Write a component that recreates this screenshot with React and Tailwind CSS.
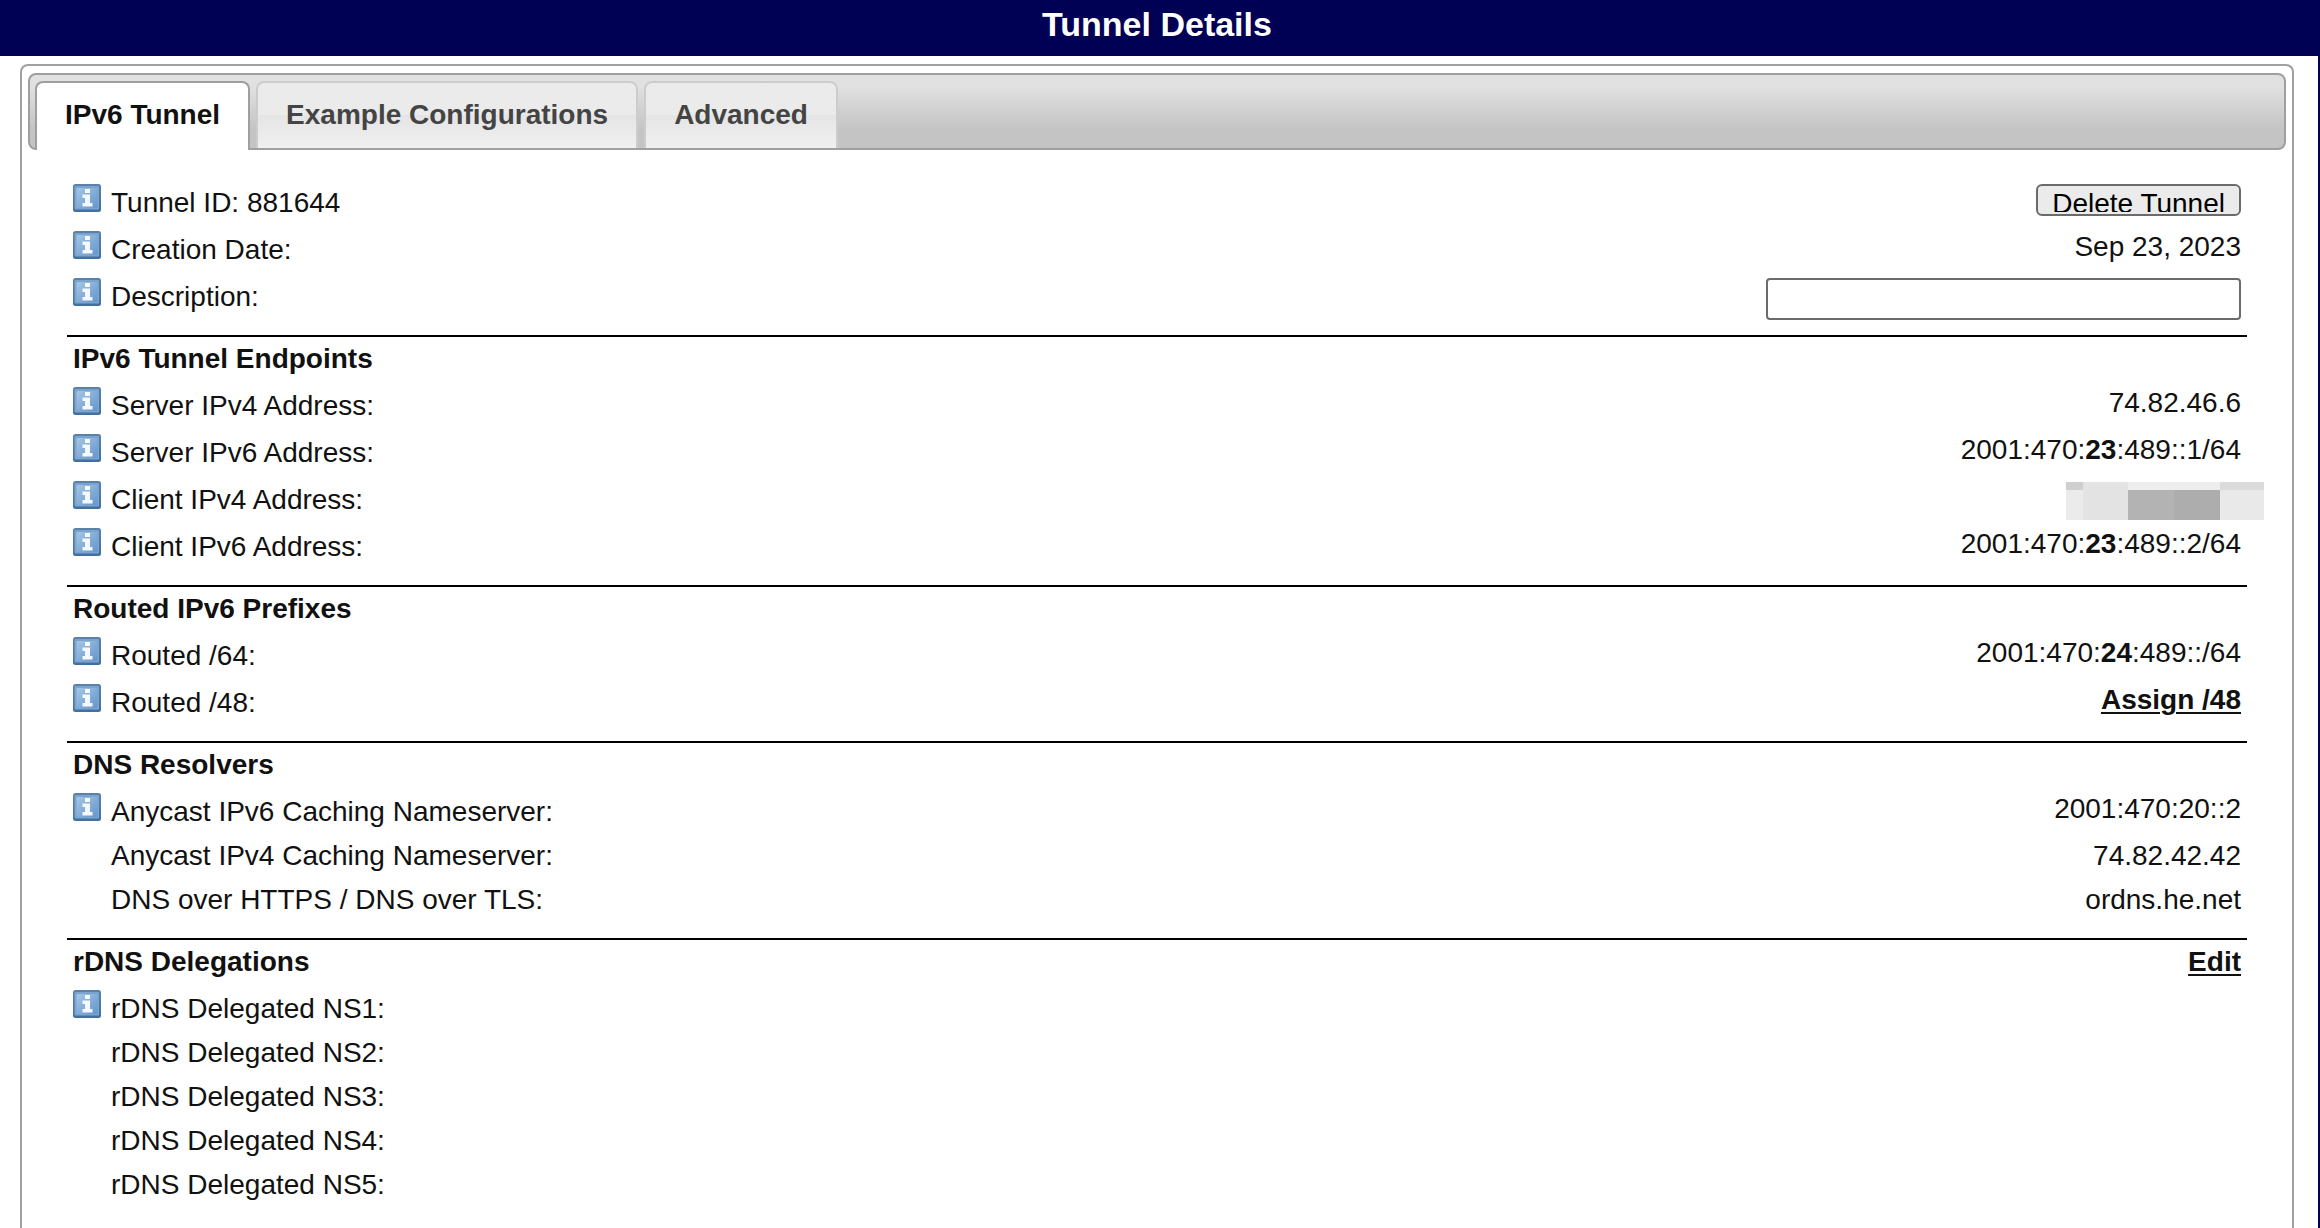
import { useState } from 'react';

const tabs = ['IPv6 Tunnel', 'Example Configurations', 'Advanced'];

/**
 * Small blue "i" square shown before the labels
 */
function InfoIcon() {
  return (
    <svg className="mt-1.5 size-7 shrink-0" viewBox="0 0 28 28" aria-hidden="true">
      <defs>
        <linearGradient id="info-fill" x1="0" y1="0" x2="1" y2="1">
          <stop offset="0" stopColor="#a6c6e6" />
          <stop offset="1" stopColor="#6496cb" />
        </linearGradient>
        <linearGradient id="info-edge" x1="0" y1="0" x2="0" y2="1">
          <stop offset="0" stopColor="#5c82a9" />
          <stop offset="1" stopColor="#426f9f" />
        </linearGradient>
      </defs>
      <rect width="28" height="28" rx="2.5" fill="url(#info-edge)" />
      <rect x="1.5" y="2" width="24.5" height="23.5" rx="1" fill="#7ba5d1" />
      <rect x="3.5" y="4" width="21" height="20" rx="1" fill="url(#info-fill)" />
      <path
        d="M12 5h5v4h-5zM9.5 10.5H17V19h2.500v3.500H9.500V19H12v-5H9.500z"
        fill="#fff"
        fillOpacity="0.92"
      />
    </svg>
  );
}

/**
 * One label / value line of a section
 */
function Row({ label, info, htmlFor, children }) {
  return (
    <div className="flex items-start justify-between px-1.5">
      <dt className="flex items-start gap-2.5">
        {info ? <InfoIcon /> : <span className="w-7 shrink-0" />}
        <span className={info ? 'pt-[9px] pb-1.5' : 'py-1.5'}>
          {htmlFor ? <label htmlFor={htmlFor}>{label}</label> : label}
        </span>
      </dt>
      <dd className="pt-1.5 text-right">{children}</dd>
    </div>
  );
}

function Section({ title, action, last, children }) {
  return (
    <section className={last ? '' : 'border-b-2 border-black pb-4'}>
      {title && (
        <div className="flex justify-between px-1.5 py-1.5 font-bold">
          <h2>{title}</h2>
          {action}
        </div>
      )}
      <dl>{children}</dl>
    </section>
  );
}

function ActionLink({ children }) {
  return (
    <a href="#" className="font-bold underline decoration-2 underline-offset-3">
      {children}
    </a>
  );
}

/**
 * Masked client address
 */
function MaskedAddress() {
  return (
    <div className="mt-px -mr-[23px] grid grid-cols-[17px_45px_46px_46px_44px] grid-rows-[8px_30px]">
      <span className="bg-[#cfcfcf]" />
      <span className="bg-[#e4e4e4]" />
      <span className="bg-[#ededed]" />
      <span className="bg-[#ededed]" />
      <span className="bg-[#dbdbdb]" />
      <span className="bg-[#ebebeb]" />
      <span className="bg-[#e3e3e3]" />
      <span className="bg-[#b3b3b3]" />
      <span className="bg-[#adadad]" />
      <span className="bg-[#e9e9e9]" />
    </div>
  );
}

function TabBar() {
  const [active, setActive] = useState(tabs[0]);

  return (
    <div
      role="tablist"
      className="flex h-[77px] items-stretch gap-1.5 rounded-lg border-2 border-[#9f9f9f] bg-linear-to-b from-[#e1e1e1] from-15% to-[#c4c4c4] to-75% pt-1.5 pl-[5px]"
    >
      {tabs.map((tab) => (
        <button
          key={tab}
          type="button"
          role="tab"
          aria-selected={tab === active}
          onClick={() => setActive(tab)}
          className={
            tab === active
              ? '-mb-0.5 rounded-t-lg border-2 border-b-0 border-[#9f9f9f] bg-white px-7 pb-1 font-bold text-[#111111]'
              : 'rounded-t-lg border-2 border-b-0 border-[#cccccc] bg-linear-to-b from-[#ebebeb] from-50% via-[#e5e5e5] via-50% to-[#f0f0f0] px-7 pb-0.5 font-bold text-[#444444]'
          }
        >
          {tab}
        </button>
      ))}
    </div>
  );
}

export default function App() {
  return (
    <div className="min-h-screen border-r-2 border-[#000055] bg-white font-['Liberation_Sans',Arial,sans-serif] text-[28px] leading-8 text-[#111111]">
      <header className="-mr-0.5 bg-[#000055] pt-1 pr-1.5 pb-3">
        <h1 className="text-center text-[34px] leading-10 font-bold text-white">Tunnel Details</h1>
      </header>

      <main className="px-5 pt-2 pr-6">
        <div className="rounded-t-lg border-2 border-b-0 border-[#a0a0a0] px-1.5 pt-[7px]">
          <TabBar />

          <div className="px-[39px] pt-7 pb-6">
            <Section>
              <Row info label="Tunnel ID: 881644">
                <button
                  type="button"
                  className="block h-8 rounded-md border-2 border-[#6b6b6b] bg-[#ebebeb] px-[14px] py-0.5 text-black"
                >
                  <span className="block h-6 overflow-hidden">Delete Tunnel</span>
                </button>
              </Row>
              <Row info label="Creation Date:">Sep 23, 2023</Row>
              <Row info label="Description:" htmlFor="description">
                <input
                  id="description"
                  type="text"
                  className="-mb-px block h-[42px] w-[475px] rounded-sm border-2 border-[#6b6b6b] bg-white px-1"
                />
              </Row>
            </Section>

            <Section title="IPv6 Tunnel Endpoints">
              <Row info label="Server IPv4 Address:">74.82.46.6</Row>
              <Row info label="Server IPv6 Address:">
                2001:470:<b>23</b>:489::1/64
              </Row>
              <Row info label="Client IPv4 Address:">
                <MaskedAddress />
              </Row>
              <Row info label="Client IPv6 Address:">
                2001:470:<b>23</b>:489::2/64
              </Row>
            </Section>

            <Section title="Routed IPv6 Prefixes">
              <Row info label="Routed /64:">
                2001:470:<b>24</b>:489::/64
              </Row>
              <Row info label="Routed /48:">
                <ActionLink>Assign /48</ActionLink>
              </Row>
            </Section>

            <Section title="DNS Resolvers">
              <Row info label="Anycast IPv6 Caching Nameserver:">2001:470:20::2</Row>
              <Row label="Anycast IPv4 Caching Nameserver:">74.82.42.42</Row>
              <Row label="DNS over HTTPS / DNS over TLS:">ordns.he.net</Row>
            </Section>

            <Section title="rDNS Delegations" action={<ActionLink>Edit</ActionLink>} last>
              <Row info label="rDNS Delegated NS1:" />
              <Row label="rDNS Delegated NS2:" />
              <Row label="rDNS Delegated NS3:" />
              <Row label="rDNS Delegated NS4:" />
              <Row label="rDNS Delegated NS5:" />
            </Section>
          </div>
        </div>
      </main>
    </div>
  );
}
